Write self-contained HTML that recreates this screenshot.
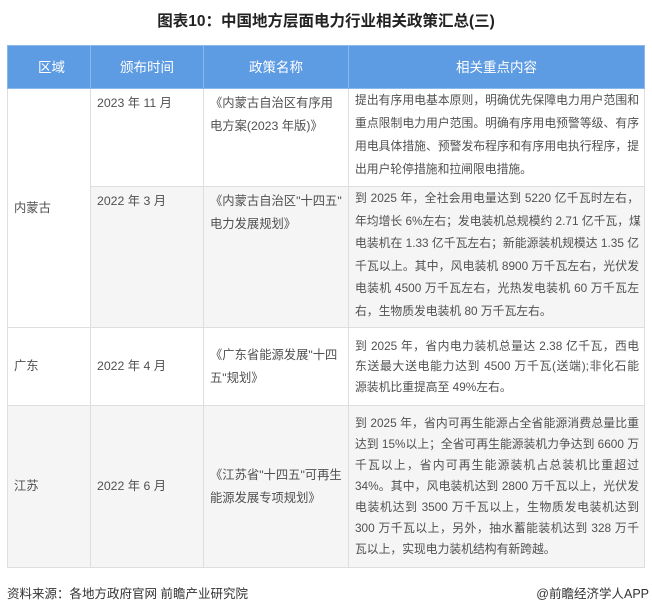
<!DOCTYPE html>
<html><head><meta charset="utf-8"><style>
body{margin:0;width:652px;height:612px;background:#fff;font-family:"Liberation Sans","Noto Sans CJK SC",sans-serif;color:#505050;position:relative;overflow:hidden}
.title{position:absolute;top:9px;left:0;width:652px;text-align:center;font-size:15.5px;font-weight:bold;color:#222}
table{position:absolute;left:7px;top:45px;border-collapse:collapse;table-layout:fixed;width:637px}
td,th{border:1px solid #dedede;font-size:12.3px;line-height:23px;vertical-align:middle;padding:0 6px;text-align:left;font-weight:normal;overflow:hidden}
th{background:#5d9be2;color:#fff;height:42px;text-align:center;font-size:13.5px;border-color:#8ab8ec}
td.t{vertical-align:top;padding-top:3px}
td.j{font-size:11.8px;padding:0 5px 0 6px}
td.j div{white-space:nowrap;text-align:justify;text-align-last:justify}
td.j div.l{text-align-last:left}
.g td{background:#f5f5f5}
.foot{position:absolute;top:583px;font-size:12.5px;color:#333}
</style></head><body>
<div class="title">图表10：中国地方层面电力行业相关政策汇总(三)</div>
<table>
<colgroup><col style="width:83px"><col style="width:113px"><col style="width:145px"><col style="width:296px"></colgroup>
<tr><th style="text-align:left;padding-left:30px">区域</th><th>颁布时间</th><th>政策名称</th><th>相关重点内容</th></tr>
<tr style="height:98px"><td rowspan="2" style="background:#fff">内蒙古</td><td class="t">2023 年 11 月</td><td class="t">《内蒙古自治区有序用<br>电方案(2023 年版)》</td><td class="t j"><div>提出有序用电基本原则，明确优先保障电力用户范围和</div><div>重点限制电力用户范围。明确有序用电预警等级、有序</div><div>用电具体措施、预警发布程序和有序用电执行程序，提</div><div class="l">出用户轮停措施和拉闸限电措施。</div></td></tr>
<tr class="g" style="height:141px"><td class="t">2022 年 3 月</td><td class="t">《内蒙古自治区"十四五"<br>电力发展规划》</td><td class="t j" style="line-height:22.6px"><div>到 2025 年，全社会用电量达到 5220 亿千瓦时左右，</div><div>年均增长 6%左右；发电装机总规模约 2.71 亿千瓦，煤</div><div>电装机在 1.33 亿千瓦左右；新能源装机规模达 1.35 亿</div><div>千瓦以上。其中，风电装机 8900 万千瓦左右，光伏发</div><div>电装机 4500 万千瓦左右，光热发电装机 60 万千瓦左</div><div class="l">右，生物质发电装机 80 万千瓦左右。</div></td></tr>
<tr style="height:78px"><td>广东</td><td>2022 年 4 月</td><td>《广东省能源发展"十四<br>五"规划》</td><td class="j" style="line-height:20.5px"><div>到 2025 年，省内电力装机总量达 2.38 亿千瓦，西电</div><div>东送最大送电能力达到 4500 万千瓦(送端);非化石能</div><div class="l">源装机比重提高至 49%左右。</div></td></tr>
<tr class="g" style="height:162px"><td>江苏</td><td>2022 年 6 月</td><td>《江苏省"十四五"可再生<br>能源发展专项规划》</td><td class="j" style="line-height:21px"><div>到 2025 年，省内可再生能源占全省能源消费总量比重</div><div>达到 15%以上；全省可再生能源装机力争达到 6600 万</div><div>千瓦以上，省内可再生能源装机占总装机比重超过</div><div>34%。其中，风电装机达到 2800 万千瓦以上，光伏发</div><div>电装机达到 3500 万千瓦以上，生物质发电装机达到</div><div>300 万千瓦以上，另外，抽水蓄能装机达到 328 万千</div><div class="l">瓦以上，实现电力装机结构有新跨越。</div></td></tr>
</table>
<div class="foot" style="left:7px">资料来源：各地方政府官网 前瞻产业研究院</div>
<div class="foot" style="right:3px">@前瞻经济学人APP</div>
</body></html>
